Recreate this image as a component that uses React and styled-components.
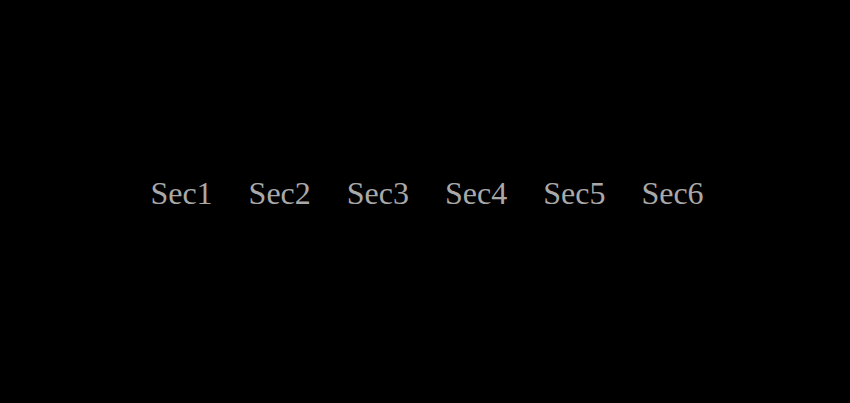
import React from "react";
import styled, { createGlobalStyle } from "styled-components";

const GlobalStyle = createGlobalStyle`
  html, body {
    margin: 0;
    padding: 0;
    background: #000;
  }
`;

const Page = styled.div`
  height: 403px;
  display: flex;
  justify-content: center;
  align-items: center;
  background: #000;
`;

const Nav = styled.nav`
  display: flex;
  gap: 36px;
  margin: 0 0 16px 4px;
`;

const Item = styled.a`
  font-family: "Liberation Serif", "Times New Roman", serif;
  font-size: 32px;
  color: #a9a9a9;
  text-decoration: none;
`;

const sections = ["Sec1", "Sec2", "Sec3", "Sec4", "Sec5", "Sec6"];

const App = () => (
  <>
    <GlobalStyle />
    <Page>
      <Nav>
        {sections.map((s) => (
          <Item key={s}>{s}</Item>
        ))}
      </Nav>
    </Page>
  </>
);

export default App;
